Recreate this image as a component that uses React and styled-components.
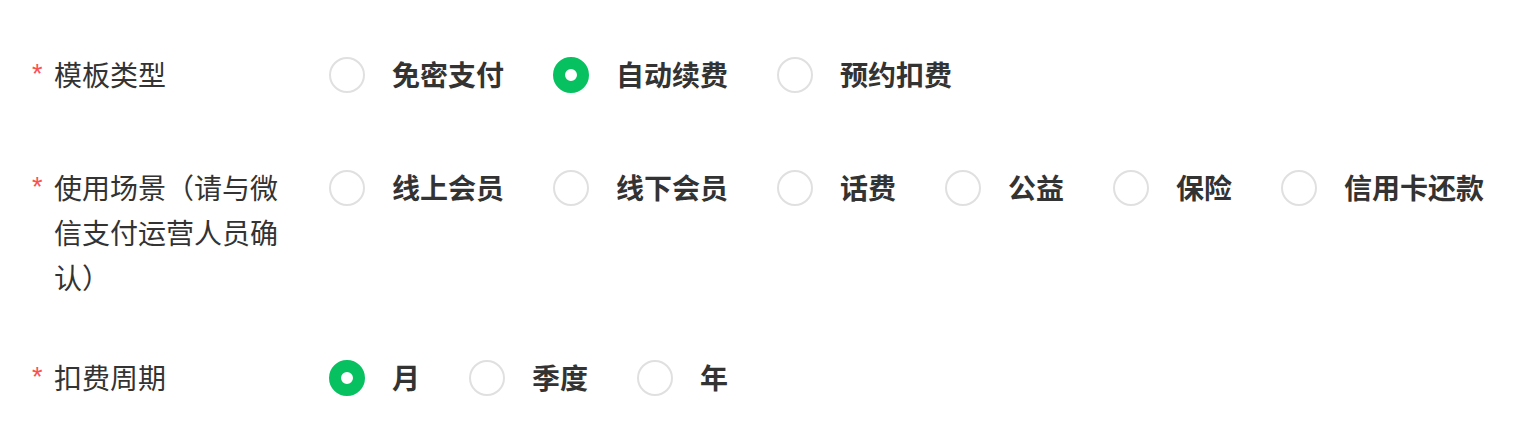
import React, { useState } from 'react';
import styled, { createGlobalStyle } from 'styled-components';

const GlobalStyle = createGlobalStyle`
  body {
    margin: 0;
    background: #fff;
    font-family: "Noto Sans CJK SC", "Noto Sans", sans-serif;
    color: #353535;
  }
`;

const Form = styled.div`
  display: flex;
  flex-direction: column;
  padding: 52px 0 0 32px;
`;

const Row = styled.div`
  display: flex;
  align-items: flex-start;
  margin-bottom: ${props => props.spacing}px;
`;

const Label = styled.div`
  display: flex;
  width: 297px;
  flex-shrink: 0;
`;

const Star = styled.span`
  width: 22px;
  flex-shrink: 0;
  color: #fa5151;
  font-family: "Liberation Sans", sans-serif;
  font-size: 27px;
  line-height: 45px;
`;

const LabelText = styled.span`
  width: 240px;
  font-size: 28px;
  line-height: 45px;
  color: #333;
`;

const Options = styled.div`
  display: flex;
  align-items: center;
`;

const Option = styled.label`
  display: flex;
  align-items: center;
  height: 45px;
  margin-right: 49px;
  cursor: pointer;
`;

const Circle = styled.span`
  box-sizing: border-box;
  width: 36px;
  height: 36px;
  border-radius: 50%;
  border: ${props => (props.checked ? '12px solid #07c160' : '2px solid #e0e0e0')};
  background: #fff;
  margin-right: 27px;
  flex-shrink: 0;
`;

const OptionText = styled.span`
  font-size: 28px;
  font-weight: 700;
  line-height: 45px;
  color: #333;
`;

const fields = [
  {
    key: 'type',
    label: '模板类型',
    options: ['免密支付', '自动续费', '预约扣费'],
    initial: '自动续费',
    spacing: 68,
  },
  {
    key: 'scene',
    label: '使用场景（请与微信支付运营人员确认）',
    options: ['线上会员', '线下会员', '话费', '公益', '保险', '信用卡还款'],
    initial: null,
    spacing: 55,
  },
  {
    key: 'cycle',
    label: '扣费周期',
    options: ['月', '季度', '年'],
    initial: '月',
    spacing: 0,
  },
];

const RadioField = ({ field }) => {
  const [value, setValue] = useState(field.initial);

  return (
    <Row spacing={field.spacing}>
      <Label>
        <Star>*</Star>
        <LabelText>{field.label}</LabelText>
      </Label>
      <Options>
        {field.options.map(opt => (
          <Option key={opt} onClick={() => setValue(opt)}>
            <Circle checked={value === opt} />
            <OptionText>{opt}</OptionText>
          </Option>
        ))}
      </Options>
    </Row>
  );
};

const App = () => (
  <>
    <GlobalStyle />
    <Form>
      {fields.map(f => (
        <RadioField key={f.key} field={f} />
      ))}
    </Form>
  </>
);

export default App;
